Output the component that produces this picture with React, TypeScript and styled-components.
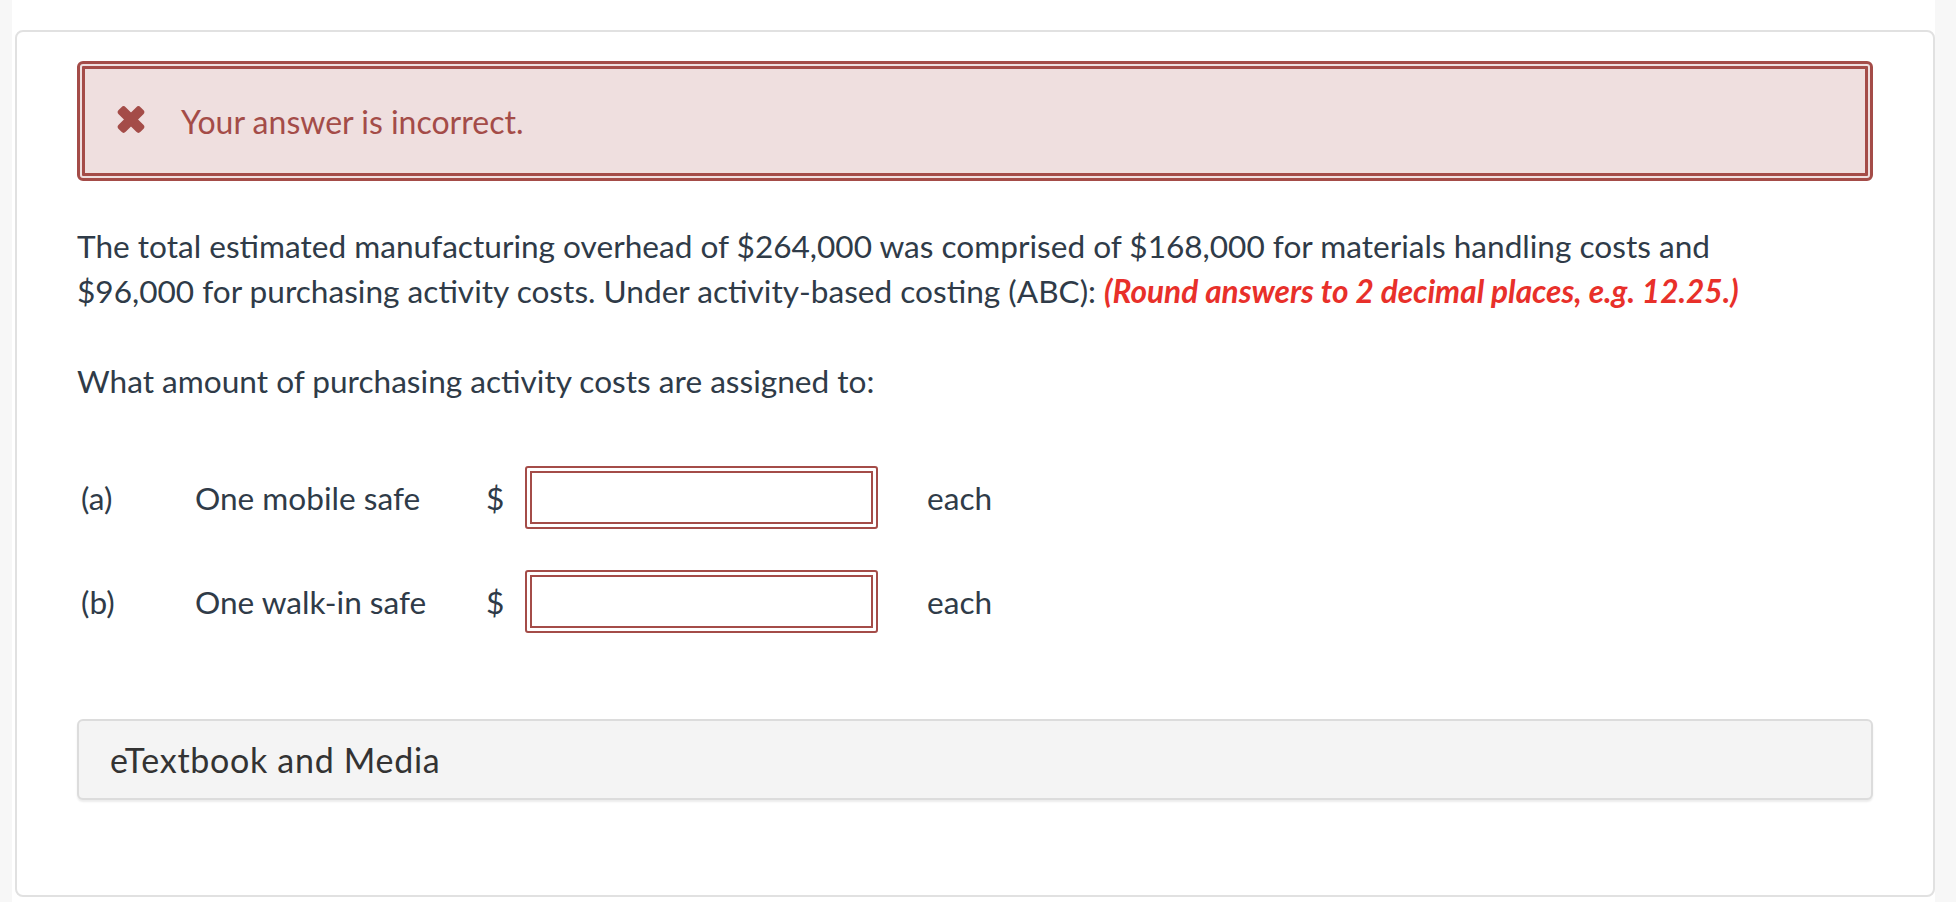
import React from "react";
import styled, { createGlobalStyle } from "styled-components";

const GlobalStyle = createGlobalStyle`
  html, body { margin: 0; padding: 0; background: #f7f7f7; }
  body { font-family: Lato, "Open Sans", sans-serif; color: #2f3b48; }
  * { box-sizing: border-box; }
`;

const Shell = styled.div`
  margin: 0 21px 0 12px;
  background: #ffffff;
  padding: 30px 0 5px 3px;
  height: 902px;
`;

const Card = styled.section`
  border: 2px solid #e1e1e1;
  border-radius: 8px;
  height: 867px;
  padding: 29px 60px 0 60px;
`;

const Alert = styled.div`
  display: flex;
  align-items: center;
  gap: 35px;
  height: 120px;
  padding-left: 31px;
  background: #efdfdf;
  border: 8px double #a44c48;
  border-radius: 6px;
  color: #a44c48;
  font-size: 32px;
`;

const CrossIcon = styled.svg`
  width: 30px;
  height: 29px;
  flex: none;
  margin-top: -3px;
`;

const Para = styled.p<{ $top?: number }>`
  margin: ${(p) => p.$top ?? 0}px 0 0 0;
  max-width: 1700px;
  font-size: 31.6px;
  line-height: 45px;
  color: #2f3b48;
`;

const Hint = styled.strong`
  color: #e8302a;
  font-style: italic;
  font-weight: 700;
`;

const Rows = styled.div`
  display: flex;
  flex-direction: column;
  gap: 41px;
  margin-top: 62px;
  padding-left: 4px;
`;

const Row = styled.div`
  display: grid;
  grid-template-columns: 114px 291px 39px 353px auto;
  align-items: center;
  font-size: 31.6px;
  color: #2f3b48;
`;

const Answer = styled.div`
  width: 353px;
  height: 63px;
  border: 7px double #a44c48;
  border-radius: 3px;
  background: #fff;
`;

const Each = styled.span`
  padding-left: 49px;
`;

const Media = styled.div`
  margin-top: 86px;
  height: 81px;
  display: flex;
  align-items: center;
  padding-left: 31px;
  background: #f4f4f4;
  border: 2px solid #dcdcdc;
  border-radius: 6px;
  box-shadow: 0 2px 2px rgba(0, 0, 0, 0.08);
  font-size: 34px;
  letter-spacing: 0.7px;
  color: #333;
`;

function Cross() {
  return (
    <CrossIcon viewBox="0 0 30 29" aria-hidden="true">
      <g fill="#a44c48" transform="translate(15 14.5)">
        <rect x="-15.5" y="-5" width="31" height="10" rx="3" transform="rotate(45)" />
        <rect x="-15.5" y="-5" width="31" height="10" rx="3" transform="rotate(-45)" />
      </g>
    </CrossIcon>
  );
}

export default function App() {
  return (
    <>
      <GlobalStyle />
      <Shell>
        <Card>
          <Alert>
            <Cross />
            <span>Your answer is incorrect.</span>
          </Alert>
          <Para $top={43}>
            The total estimated manufacturing overhead of $264,000 was comprised of $168,000 for materials handling costs and
            $96,000 for purchasing activity costs. Under activity-based costing (ABC):{" "}
            <Hint>(Round answers to 2 decimal places, e.g. 12.25.)</Hint>
          </Para>
          <Para $top={45}>What amount of purchasing activity costs are assigned to:</Para>
          <Rows>
            <Row>
              <span>(a)</span>
              <span>One mobile safe</span>
              <span>$</span>
              <Answer />
              <Each>each</Each>
            </Row>
            <Row>
              <span>(b)</span>
              <span>One walk-in safe</span>
              <span>$</span>
              <Answer />
              <Each>each</Each>
            </Row>
          </Rows>
          <Media>eTextbook and Media</Media>
        </Card>
      </Shell>
    </>
  );
}
